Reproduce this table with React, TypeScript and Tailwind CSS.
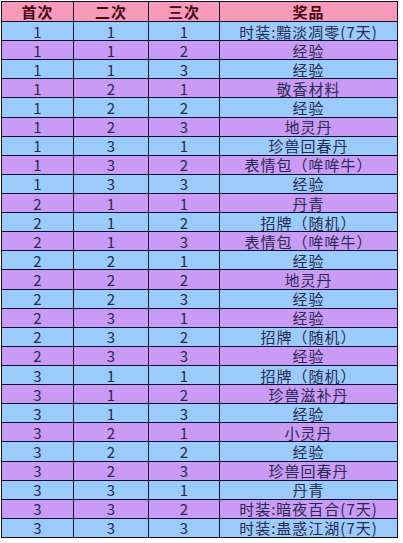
const rows: [number, number, number, string][] = [
    [1, 1, 1, "时装:黯淡凋零(7天)"],
    [1, 1, 2, "经验"],
    [1, 1, 3, "经验"],
    [1, 2, 1, "敬香材料"],
    [1, 2, 2, "经验"],
    [1, 2, 3, "地灵丹"],
    [1, 3, 1, "珍兽回春丹"],
    [1, 3, 2, "表情包（哞哞牛）"],
    [1, 3, 3, "经验"],
    [2, 1, 1, "丹青"],
    [2, 1, 2, "招牌（随机）"],
    [2, 1, 3, "表情包（哞哞牛）"],
    [2, 2, 1, "经验"],
    [2, 2, 2, "地灵丹"],
    [2, 2, 3, "经验"],
    [2, 3, 1, "经验"],
    [2, 3, 2, "招牌（随机）"],
    [2, 3, 3, "经验"],
    [3, 1, 1, "招牌（随机）"],
    [3, 1, 2, "珍兽滋补丹"],
    [3, 1, 3, "经验"],
    [3, 2, 1, "小灵丹"],
    [3, 2, 2, "经验"],
    [3, 2, 3, "珍兽回春丹"],
    [3, 3, 1, "丹青"],
    [3, 3, 2, "时装:暗夜百合(7天)"],
    [3, 3, 3, "时装:蛊惑江湖(7天)"],
]

const headers = ["首次", "二次", "三次", "奖品"]

const App = () => {
    return (
        <div className="w-[403px] h-[543px] bg-white pl-px pt-px" style={{ fontFamily: '"Noto Sans CJK SC", "Noto Sans", sans-serif' }}>
            <div className="grid w-[397px] h-[537px] bg-[#10102a] p-px gap-px grid-cols-[71px_74px_70px_177px] grid-rows-[19px_repeat(27,minmax(0,1fr))] text-[15px] leading-none">
                {headers.map((h) => (
                    <div key={h} className="flex items-center justify-center bg-[#f89ab9] font-bold text-[#4a0a14] tracking-[1px]">{h}</div>
                ))}
                {rows.map((r, i) => {
                    const bg = i % 2 === 0 ? "bg-[#9acbfb]" : "bg-[#c99af6]"
                    return [
                        <div key={i + "a"} className={`flex items-center justify-center ${bg} text-[#2a2a50]`}>{r[0]}</div>,
                        <div key={i + "b"} className={`flex items-center justify-center ${bg} text-[#2a2a50]`}>{r[1]}</div>,
                        <div key={i + "c"} className={`flex items-center justify-center ${bg} text-[#2a2a50]`}>{r[2]}</div>,
                        <div key={i + "d"} className={`flex items-center justify-center ${bg} text-[#2a2a50] tracking-[1px]`}>{r[3]}</div>,
                    ]
                })}
            </div>
        </div>
    )
}

export default App
